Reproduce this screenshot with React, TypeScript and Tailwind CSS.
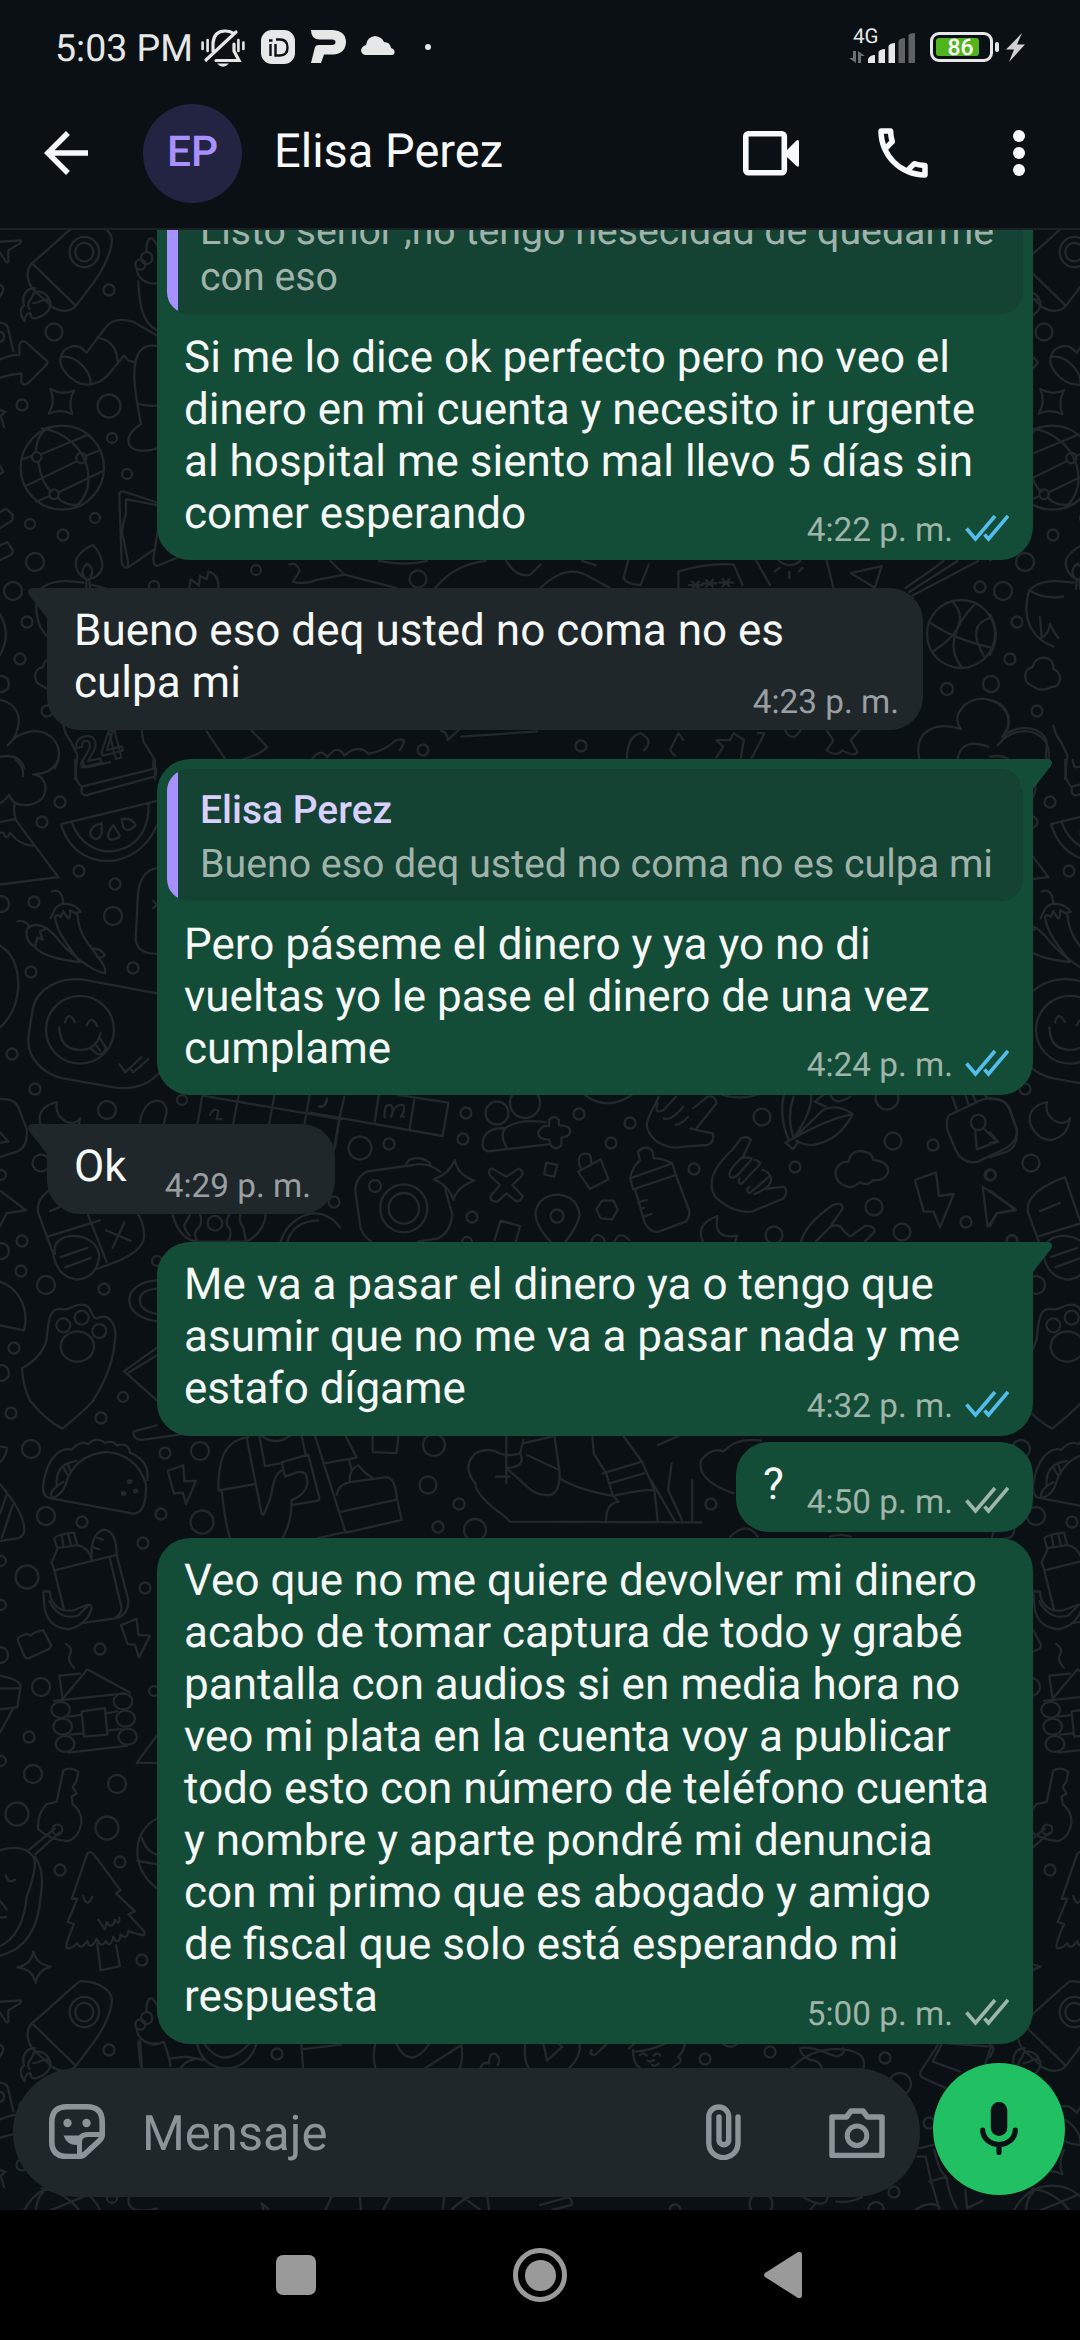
import type { ReactNode } from 'react';
import { MdArrowBack, MdOutlineCall } from 'react-icons/md';

type Message = {
  id: number;
  mine: boolean;
  lines: string[];
  time: string;
  read?: boolean;
  tail?: boolean;
  quote?: { author: string; lines: string[] };
  spacing: string;
};

const messages: Message[] = [
  {
    id: 1,
    mine: true,
    lines: [
      'Si me lo dice ok perfecto pero no veo el',
      'dinero en mi cuenta y necesito ir urgente',
      'al hospital me siento mal llevo 5 días sin',
      'comer esperando',
    ],
    time: '4:22 p. m.',
    read: true,
    quote: {
      author: '',
      lines: ['Listo señor ,no tengo nesecidad de quedarme', 'con eso'],
    },
    spacing: 'mb-7',
  },
  {
    id: 2,
    mine: false,
    lines: ['Bueno eso deq usted no coma no es', 'culpa mi'],
    time: '4:23 p. m.',
    tail: true,
    spacing: 'mb-[29px]',
  },
  {
    id: 3,
    mine: true,
    lines: [
      'Pero páseme el dinero y ya yo no di',
      'vueltas yo le pase el dinero de una vez',
      'cumplame',
    ],
    time: '4:24 p. m.',
    read: true,
    tail: true,
    quote: {
      author: 'Elisa Perez',
      lines: ['Bueno eso deq usted no coma no es culpa mi'],
    },
    spacing: 'mb-[29px]',
  },
  {
    id: 4,
    mine: false,
    lines: ['Ok'],
    time: '4:29 p. m.',
    tail: true,
    spacing: 'mb-7',
  },
  {
    id: 5,
    mine: true,
    lines: [
      'Me va a pasar el dinero ya o tengo que',
      'asumir que no me va a pasar nada y me',
      'estafo dígame',
    ],
    time: '4:32 p. m.',
    read: true,
    tail: true,
    spacing: 'mb-1.5',
  },
  {
    id: 6,
    mine: true,
    lines: ['?'],
    time: '4:50 p. m.',
    spacing: 'mb-1.5',
  },
  {
    id: 7,
    mine: true,
    lines: [
      'Veo que no me quiere devolver mi dinero',
      'acabo de tomar captura de todo y grabé',
      'pantalla con audios si en media hora no',
      'veo mi plata en la cuenta voy a publicar',
      'todo esto con número de teléfono cuenta',
      'y nombre y aparte pondré mi denuncia',
      'con mi primo que es abogado y amigo',
      'de fiscal que solo está esperando mi',
      'respuesta',
    ],
    time: '5:00 p. m.',
    spacing: '',
  },
];

// [cx, cy, r] of the bubbles scattered over the repeating part of the wallpaper
const tileDots: number[][] = [
  [109, 290, 5.5], [54, 332, 8.5], [22, 405, 5.5], [109, 406, 11.5], [112, 438, 5],
  [127, 474, 5], [30, 524, 5], [95, 518, 5], [63, 535, 5.5], [35, 562, 9],
  [13, 591, 9], [27, 622, 5.5], [20, 659, 5.5], [256, 570, 5], [154, 586, 5],
  [47, 711, 5.5], [1, 684, 8], [60, 802, 5.5], [42, 822, 5.5], [79, 871, 5.5],
  [115, 884, 5.5], [34, 902, 5.5], [113, 916, 9], [31, 972, 5.5], [133, 968, 5.5],
  [12, 1054, 5.5], [35, 1089, 5.5], [107, 1110, 9], [182, 1100, 5], [41, 1163, 8.5],
  [22, 1241, 5.5], [21, 1271, 5.5], [46, 1285, 9], [104, 1289, 5.5], [14, 1348, 5.5],
  [157, 1261, 5], [123, 1397, 5], [1, 1251, 8], [1, 1373, 8], [1, 1175, 5],
  [1, 904, 8], [11, 1413, 5.5], [101, 1418, 5.5], [31, 1449, 9], [46, 1516, 9],
  [82, 1522, 5.5], [165, 1453, 5.5], [200, 1451, 9], [161, 1514, 5.5], [202, 1522, 11.5],
  [143, 1543, 5.5], [145, 1588, 5.5], [27, 1577, 11.5], [100, 1649, 5.5], [41, 1687, 9],
  [29, 1737, 5.5], [33, 1774, 9], [117, 1784, 9], [17, 1814, 11.5], [107, 1828, 11.5],
  [120, 1862, 5.5], [60, 1870, 5.5], [142, 1960, 5.5], [154, 1691, 5], [1, 1605, 5],
  [1, 1561, 5], [0, 1655, 8], [1, 1761, 5],
];

const middleDots: number[][] = [
  [466, 1113, 5.5], [463, 1139, 5.5], [360, 1148, 11.5], [389, 1144, 5.5], [497, 1113, 11.5],
  [525, 1103, 15], [579, 1114, 5.5], [630, 1123, 5.5], [611, 1143, 5.5], [694, 1169, 5.5],
  [762, 1117, 8.5], [795, 1167, 5.5], [893, 1141, 8.5], [933, 1145, 5.5], [887, 1098, 11.5],
  [990, 1175, 5.5], [966, 1222, 5.5], [874, 1207, 8.5], [902, 1232, 8.5], [774, 1235, 8.5],
  [472, 1217, 5.5], [375, 1186, 6], [334, 1202, 5.5], [557, 1216, 6.5], [467, 1242, 5],
  [1012, 1240, 5], [434, 1445, 11], [428, 1485, 8.5], [459, 1504, 5.5], [438, 1527, 5.5],
  [475, 1530, 11], [711, 1504, 5.5], [418, 579, 8.5], [980, 587, 5.5], [947, 689, 6],
  [581, 746, 5.5], [423, 750, 5.5], [277, 2054, 5.5], [900, 2084, 11], [885, 2058, 5.5],
  [770, 2052, 5.5], [705, 2059, 5.5], [894, 2192, 5.5], [761, 2204, 11.5], [876, 2210, 8],
  [675, 2210, 5.5], [929, 2123, 5.5], [961, 634, 34],
];

function Stroke({ d }: { d: string }) {
  return <path d={d} vectorEffect="non-scaling-stroke" />;
}

function Oval({ at }: { at: number[] }) {
  return (
    <ellipse
      cx={at[0]}
      cy={at[1]}
      rx={at[2]}
      ry={at[3]}
      vectorEffect="non-scaling-stroke"
    />
  );
}

function Dots({ list }: { list: number[][] }) {
  return (
    <>
      {list.map(([x, y, r]) => (
        <circle key={`${x}-${y}`} cx={x} cy={y} r={r} />
      ))}
    </>
  );
}

function Tile() {
  return (
    <g>
      <Dots list={tileDots} />
      <path d="M57 1102Q37 1107 40 1123Q47 1140 61 1140Q78 1137 80 1118Q76 1125 67 1122Q54 1115 57 1102Z" />
      {/* rocket, boots, globe, candle */}
      <g transform="translate(0 228) scale(.3333 .3444)">
        <Stroke d="M96 102C150 60 200 10 240-20C300-20 345 10 334 50C320 120 270 170 228 226C210 245 180 245 155 228L110 188C80 165 75 125 96 102ZM96 102L228 226" />
        <Oval at={[253, 70, 44, 44]} />
        <Oval at={[253, 70, 27, 27]} />
        <Stroke d="M105 175C75 175 65 200 72 225C58 235 60 255 74 270C74 255 82 245 92 248C90 262 100 265 115 260C140 250 155 235 150 212M88 235C75 215 100 205 100 190C120 175 145 195 148 210C130 200 120 220 100 218" />
        <Stroke d="M0 40L60 36Q66 38 60 44L25 65L25 98Q20 104 16 95L0 72" />
        <Oval at={[421, 106, 15, 15]} />
        <Oval at={[440, 87, 17, 17]} />
        <Stroke d="M471 160C450 165 415 155 410 120M440 70C438 40 445 28 456 31C465 35 468 45 471 50M415 155C418 220 425 275 471 297" />
        <Stroke d="M0 382C20 372 40 368 58 368L58 340Q66 322 78 332L140 385Q146 391 138 398L85 450Q70 460 64 448L64 422Q30 425 0 435M0 275Q20 275 24 292L40 358M0 302Q14 304 12 318Q10 330 0 330" />
        <Stroke d="M182 375C190 345 220 340 240 345L260 362L320 285C340 262 370 265 400 272L471 312M182 375C175 400 200 430 230 447C260 462 300 455 330 420L372 370L385 385L405 390M292 318C340 325 352 360 352 385M182 375C220 365 275 410 272 455" />
        <Stroke d="M471 342C420 335 405 370 403 420C402 470 415 530 423 570C390 590 380 610 388 630C400 650 440 650 471 640M412 510Q440 518 471 516" />
        <Stroke d="M151 467Q185 487 222 472Q203 505 217 541Q183 523 146 539Q168 505 151 467Z" />
        <Oval at={[187, 696, 125, 122]} />
        <Stroke d="M108 650C108 610 130 585 150 578M125 582C190 590 260 640 265 720C268 760 250 790 225 812M115 680C120 720 140 760 155 765M175 785C190 800 220 810 240 800M72 670L95 662M123 657L265 600M76 750L230 677M257 662L300 645M110 795L148 778M175 768L308 706" />
        <Oval at={[110, 665, 14, 14]} />
        <Oval at={[244, 668, 15, 15]} />
        <Oval at={[162, 773, 14, 14]} />
        <Stroke d="M471 797L370 765Q355 765 358 780L365 970Q370 990 385 985L460 935M471 805L378 787L378 830Q360 885 370 900L382 960Q386 975 383 985M473 880L460 960Q460 985 475 980L530 958" />
        <Stroke d="M0 825L18 815L38 832L38 848L0 872M0 922L22 912L38 935Q40 945 30 950L0 965M0 165Q15 172 8 185L0 200M0 528L16 534L2 545L12 578M0 690L10 708L0 714" />
        <Stroke d="M262 1020C235 1010 222 985 230 960C240 940 265 925 280 920C300 945 310 965 307 985C300 1010 280 1018 262 1020M252 1012C240 995 255 980 262 975C278 985 280 1000 272 1012M260 1020L258 1048M268 1020L270 1048M118 1052C150 1020 200 1022 250 1030M275 1036L320 1048" />
        <Stroke d="M118 1052Q98 1110 122 1160Q145 1200 190 1215M118 1052Q160 1080 220 1070M150 1130L155 1190Q175 1180 180 1150Q195 1180 205 1190" />
        <Stroke d="M568 1048L572 1020L597 1038L600 1010L620 1020L625 998Q658 1005 655 1048M0 1122Q35 1180 0 1240" />
        <Stroke d="M128 1330C98 1320 98 1280 128 1275C135 1235 195 1240 190 1280C220 1290 215 1335 185 1332Q155 1350 128 1330Z" />
        <Stroke d="M0 1370C50 1380 65 1420 52 1455C45 1485 35 1490 23 1502C60 1455 130 1445 165 1490C185 1520 175 1550 165 1568M0 1535Q60 1525 72 1568M190 1445Q200 1480 212 1490L232 1530L225 1600M425 1458L430 1490L465 1545L465 1600" />
      </g>
      {/* watermelon, peppers, sticker card, pills, paw */}
      <g transform="translate(0 760) scale(.3333 .4082)">
        <Stroke d="M48 0Q75 20 68 40M175 0Q160 25 130 32L100 35C140 40 145 75 125 95C105 112 70 115 45 105Q30 95 28 85Q15 100 0 106M45 105Q38 125 48 148L175 287L0 305M0 178L10 178Q20 200 30 178Q60 210 100 210M0 152L45 145" />
        <Stroke d="M225 0L228 45Q240 65 245 65L460 22L460 0M245 65L245 80Q255 90 265 85L465 40Q470 38 468 20M248 0Q250 18 260 18L330 5" />
        <Stroke d="M183 157L471 100M183 157C210 230 280 255 350 245C410 235 450 200 471 160M215 152C240 210 300 230 350 222C420 210 450 160 445 106M305 155Q268 160 272 185Q290 205 305 180ZM340 160Q315 185 330 195Q355 195 360 185ZM365 145Q395 140 407 160Q385 180 370 165Z" />
        <Stroke d="M155 322Q185 312 190 350M152 388L165 365C180 345 225 350 242 372L225 375L210 368Q212 385 205 388Q195 380 190 370L182 385Q170 375 165 385C170 420 200 450 240 495M232 378C240 440 270 450 300 490Q320 510 315 522C280 520 200 470 165 430M52 395Q75 390 90 410M80 415Q100 395 140 412L165 430M80 415Q75 445 105 458Q130 485 240 495M105 458L112 435L128 440L120 420L140 412M275 462Q300 460 315 478Q305 488 290 482" />
        <Stroke d="M471 265C430 270 415 300 413 340L407 440Q412 475 471 475M460 345L471 355L460 362M0 455Q55 480 55 555Q50 620 0 655" />
        <Stroke d="M471 572L250 538C180 530 110 560 98 610L85 680C80 730 130 770 190 780L350 803Q430 810 480 765" />
        <Oval at={[240, 661, 102, 83]} />
        <Stroke d="M195 643Q205 612 225 642M260 650Q275 622 292 652M178 655Q180 710 240 710Q290 710 302 668M270 705L292 720Q310 725 318 705L300 682M285 695L300 712M358 745L376 765L424 728M392 758L400 765L446 732" />
        <Stroke d="M0 830Q45 830 55 850L80 905Q85 945 55 958L0 973M0 912L25 935L0 938M0 1055L78 1103L20 1110L0 1142M420 888C428 825 500 820 500 862L492 890" />
        <Stroke d="M225 1022Q100 1060 115 1110L160 1210M140 1168L300 1128M225 1022L262 1110L320 1230M165 1210C150 1150 290 1150 298 1215Q290 1270 230 1273Q170 1265 160 1210M290 1247L320 1238Q440 1205 432 1160Q430 1130 412 1110M182 1218L262 1195M196 1243L272 1220M318 1152L392 1178M373 1133L338 1195M150 1105L210 1085" />
        <Stroke d="M0 1278C50 1290 90 1340 72 1397L0 1385M471 1275C360 1280 360 1365 471 1375M471 1295Q415 1300 420 1325Q420 1350 471 1357" />
        <Stroke d="M90 1568Q70 1540 66 1490C100 1475 130 1450 140 1420C145 1370 150 1340 185 1345C210 1350 215 1335 240 1335C280 1330 270 1368 290 1368C340 1350 350 1400 345 1420C340 1480 310 1530 280 1568M471 1440L372 1497L470 1568M471 1458L388 1500" />
        <Oval at={[245, 1366, 21, 17]} />
        <Oval at={[190, 1385, 21, 17]} />
        <Oval at={[298, 1399, 21, 17]} />
        <Oval at={[232, 1437, 50, 37]} />
      </g>
      {/* taco, picnic, cabin, key, tree */}
      <g transform="translate(0 1400) scale(.3333 .4209)">
        <Stroke d="M88 0Q140 50 187 68Q240 35 282 0M540 82L425 95Q400 95 400 75L470 60" />
        <Stroke d="M130 200C140 140 180 110 215 118Q240 95 265 105Q290 85 315 102Q340 95 350 108Q385 100 390 125Q450 145 442 190M130 200Q125 230 150 233L400 270Q440 270 438 200Q410 130 320 123Q220 130 195 205Q180 230 155 232Q145 215 190 195M170 205Q165 150 230 145M190 160L203 178M205 155L212 170" />
        <Oval at={[389, 194, 5, 3]} />
        <Oval at={[371, 222, 5, 3]} />
        <Oval at={[407, 216, 5, 3]} />
        <Stroke d="M503 168L550 155L553 193L588 192L558 247L548 220L522 222ZM363 535L410 520L415 558L450 560L417 612L405 582L383 580Z" />
        <Stroke d="M0 200Q75 270 73 310Q70 325 55 328L0 335M20 225L0 270M38 250L5 328M0 110L20 113Q22 130 0 148" />
        <Stroke d="M163 330Q165 320 222 315L232 345L172 352ZM185 322L190 345M205 320L212 342M172 355L155 385L163 405L192 498M163 405L350 368M232 345Q265 350 275 378Q270 320 310 308Q350 310 350 368L385 475Q385 510 350 518L245 530M328 372L365 495Q362 510 345 518M280 350L298 355M285 325L308 332" />
        <Stroke d="M130 455L150 455L152 470Q170 505 220 500Q250 490 262 487Q275 485 275 495Q260 535 205 545Q140 540 133 490ZM148 478Q180 525 235 512L262 490" />
        <Stroke d="M55 575Q50 565 60 562L82 555L92 560L105 552L130 547L152 580Q155 588 145 592L90 612Q80 618 73 608Z" />
        <Stroke d="M198 580Q220 590 210 605Q200 618 222 636M240 650L178 655L188 710L262 640L390 695M162 715L375 697M205 752L245 748M245 740L315 732L322 795L252 800ZM315 745L352 740M210 795L250 792M322 785L362 782M205 838L380 822" />
        <Oval at={[182, 736, 28, 19]} />
        <Oval at={[188, 776, 28, 19]} />
        <Oval at={[195, 817, 28, 19]} />
        <Oval at={[369, 716, 28, 19]} />
        <Oval at={[377, 757, 28, 19]} />
        <Oval at={[383, 800, 28, 19]} />
        <Stroke d="M0 655Q60 665 62 680L52 730L0 735M0 685L58 685M38 735L0 790M471 797L410 862L471 862" />
        <Stroke d="M190 880Q210 870 235 883L230 905L218 920L230 935L215 942L218 960Q250 980 243 1010Q235 1040 205 1048Q150 1045 115 1020Q110 985 140 960L170 955ZM178 1028L105 1080M165 1018L85 1070" />
        <Oval at={[172, 1021, 15, 12]} />
        <Stroke d="M0 1070C60 1055 105 1070 105 1105Q100 1140 80 1180Q70 1270 0 1298M105 1085Q135 1120 122 1180Q110 1300 0 1320M18 1130Q25 1150 45 1140M0 1190L20 1210M0 1230L18 1228" />
        <Stroke d="M262 1078Q270 1070 282 1080L362 1165L348 1172L405 1215L385 1222L432 1262Q438 1275 420 1270L385 1262Q380 1285 362 1270Q355 1300 340 1275Q330 1305 318 1285Q305 1305 290 1280Q270 1310 262 1285Q240 1310 232 1290Q215 1305 200 1302Q195 1295 222 1245L203 1240L232 1185L215 1185ZM250 1178Q260 1210 277 1180M295 1235L315 1257L320 1240Q335 1260 345 1235Q360 1250 358 1230M292 1292L302 1355L360 1345L348 1295" />
        <Stroke d="M471 995C400 1020 385 1110 471 1160M425 1040Q440 1075 471 1080M412 1095L471 1103M100 1310Q108 1340 152 1346Q112 1355 107 1385Q98 1352 53 1348Q95 1340 100 1310Z" />
      </g>
    </g>
  );
}

function Wallpaper() {
  return (
    <svg
      className="absolute inset-0 h-full w-full"
      viewBox="0 230 1080 1980"
      fill="none"
      stroke="#22282c"
      strokeWidth="2.3"
      strokeLinecap="round"
      strokeLinejoin="round"
    >
      <Tile />
      <g transform="translate(990 0)">
        <Tile />
      </g>
      <g transform="translate(0 1760)">
        <Tile />
      </g>
      <g transform="translate(990 1760)">
        <Tile />
      </g>
      <Dots list={middleDots} />
      <text
        x="80"
        y="768"
        fontSize="41"
        fontFamily="Roboto, sans-serif"
        fontWeight="700"
        strokeWidth="2"
        transform="rotate(-14 80 768)"
      >
        24
      </text>
      <path d="M929 622Q955 640 993 648M952 601Q975 625 932 652M975 604Q940 640 962 668M990 618Q965 625 985 658" />
      <g transform="translate(0 760) scale(.3333 .4082)">
        <Stroke d="M607 822L593 890M716 822L700 890M823 822L808 890M929 822L914 890M607 822L1020 880M1018 880L1005 950M630 870Q640 850 655 860L650 880L665 880M980 830Q980 850 960 848" />
        <Stroke d="M517 1112Q540 1180 600 1180L740 1180Q795 1155 797 1112M570 1115L552 1140Q560 1160 570 1165M600 1112Q610 1140 590 1150Q580 1165 592 1178M690 1112Q670 1130 690 1150Q695 1165 685 1178M722 1112Q715 1130 730 1145L738 1178M842 1180C860 1130 920 1105 960 1112Q1000 1120 1020 1145M862 1180Q880 1130 955 1128" />
        <Oval at={[645, 1135, 22, 18]} />
      </g>
      {/* strips above and below the first reply */}
      <g transform="translate(0 220) scale(.6888 .3444)">
        <Stroke d="M420 1000Q430 990 435 1020L425 1050Q440 1060 460 1045L500 1030L480 990M500 1030L575 1068M632 1068Q660 1000 705 990M735 990Q750 1040 770 1030L785 1000M785 1068Q820 1000 850 1030L885 1068M845 990L865 1003M912 990L905 1040Q910 1058 930 1060L942 1000M985 1068L985 1020Q1030 995 1065 1000L1078 1060M1098 990L1118 1060M1130 988Q1145 1015 1162 990M1125 1020L1132 1010M1146 1022L1146 1040M1165 1010L1160 1020M1200 988L1210 1068M1235 1025L1280 1005L1270 1068ZM1315 1068Q1350 1020 1370 990M1325 1090L1420 990M1320 1080L1390 990M550 990Q590 1005 620 990" />
        <Stroke d="M1005 1050L1015 1070M1015 1050L1005 1070M1000 1060H1020M1025 1045L1035 1065M1035 1045L1025 1065M1020 1055H1040M1049 1043L1059 1063M1059 1043L1049 1063M1044 1053H1064" />
        <Stroke d="M300 1485L328 1568M365 1482L388 1530Q380 1550 350 1568M452 1568Q465 1530 475 1560Q490 1520 500 1555Q520 1520 535 1550Q560 1540 575 1510Q595 1500 580 1540M640 1482Q650 1490 650 1510L665 1482M670 1500L780 1485M910 1568Q910 1500 930 1490Q950 1510 935 1540M980 1555Q970 1540 975 1530L985 1490L992 1510M1040 1560L1050 1530L1040 1510L1060 1510L1065 1490L1080 1510L1075 1568M1090 1568L1110 1490L1100 1490M1140 1482Q1150 1520 1162 1482M1200 1482L1210 1510L1200 1540Q1215 1560 1223 1540Q1240 1560 1245 1545L1235 1510L1248 1482" />
        <Stroke d="M1335 1568C1325 1480 1360 1455 1395 1478C1380 1440 1400 1390 1428 1390C1460 1400 1475 1450 1455 1500C1480 1460 1515 1470 1520 1520L1518 1568M1390 1568Q1395 1500 1435 1530" />
      </g>
      {/* people, gestures, bottle, lock */}
      <g transform="translate(310 1090) scale(.491 .3333)">
        <Stroke d="M70 20L60 85L46 200M140 15L132 95M213 22L203 118M0 68L270 138L282 38L180 15M35 25Q32 55 18 50M152 82Q150 40 165 45Q172 60 165 80Q172 40 190 45Q195 60 185 80L192 80" />
        <Stroke d="M485 163L362 184Q345 175 355 140Q365 112 396 115M400 172Q385 130 400 112Q430 85 480 97M487 108L487 90Q497 72 507 90L507 106Q530 105 530 125Q528 140 512 143L512 165Q500 185 490 165L487 148Q465 150 465 128Q470 105 487 108Z" />
        <Stroke d="M710 20C700 60 680 90 688 120C700 160 730 180 760 170L810 165Q825 155 820 130Q800 125 775 115M788 113L828 40Q825 15 810 20L780 55M708 40Q700 75 720 60L745 20M720 85Q735 95 760 50M745 105Q760 100 770 80M560 15Q605 65 655 15M840 15Q875 30 910 15" />
        <Stroke d="M965 15Q955 80 975 150M985 20Q970 80 985 145M1020 15Q1025 60 985 145L1045 60Q1075 40 1105 72Q1050 90 985 145M1105 72Q1080 150 1025 165Q1005 165 990 152M985 145L968 158L984 177L995 155M1045 15L1028 35L1050 50M1060 15Q1070 50 1100 20" />
        <Stroke d="M1302 75Q1340 50 1370 28Q1410 15 1425 55L1440 120Q1440 160 1410 180L1360 215Q1330 225 1315 180L1298 120Q1295 85 1302 75ZM1308 20L1318 62M1335 15L1342 48M1350 15L1357 38M1374 15L1380 25M1355 122L1358 178L1400 155L1372 115" />
        <Oval at={[1361, 97, 15, 23]} />
        <Stroke d="M898 150Q890 135 878 145L860 180Q800 260 825 320Q860 370 900 365L965 325Q975 300 965 290L925 297M898 150L882 200Q850 240 855 260Q865 270 880 240Q900 210 900 205Q885 200 880 205M905 210Q920 215 915 225L880 280Q870 285 875 265M922 240Q940 250 935 260L895 310Q885 300 895 290M938 260Q945 290 905 312" />
        <Stroke d="M652 265L738 220M658 298L745 255L738 220Q720 205 700 205L698 185Q685 160 668 185L672 210Q655 235 652 265L658 298M662 298L682 400Q695 430 710 425L765 395Q775 380 772 360L745 255M668 337L686 330M673 358L680 353M678 380L696 372" />
        <Stroke d="M546 245L570 297L608 268L592 208ZM552 238Q540 195 560 190Q575 190 572 218M481 218L504 225L497 260L477 253ZM595 332L618 332L627 360L615 388L592 385L583 358Z" />
        <Stroke d="M370 235L400 260L425 236Q438 245 430 260L412 285L433 318Q430 338 418 332L400 310L382 335Q365 335 368 318L387 285L366 255Q362 240 370 235ZM295 210Q300 255 335 272Q300 290 292 330Q285 290 252 268Q285 250 295 210Z" />
        <Stroke d="M115 245L210 225Q240 215 265 245M115 245Q90 265 93 310L103 415Q110 440 125 455M275 295L290 375Q285 430 260 445L220 455M195 225Q200 200 225 205Q240 210 245 222" />
        <Oval at={[191, 355, 48, 72]} />
        <Oval at={[191, 355, 31, 46]} />
        <Stroke d="M490 455Q455 400 460 360Q470 315 505 314Q545 320 549 375Q545 410 520 455M376 450L388 392L428 408L418 460M573 457Q580 420 598 445L600 455M620 455Q630 420 650 450M800 455L797 440Q790 400 830 378Q820 450 870 437L866 455" />
        <Stroke d="M1000 455Q1010 400 1065 345Q1085 335 1085 355L1060 410L1030 455M1060 410Q1080 400 1085 420L1100 440L1130 408Q1150 405 1150 425L1130 455" />
        <Stroke d="M1095 290Q1070 280 1070 245Q1075 215 1097 215Q1100 185 1120 183Q1145 185 1147 210Q1178 215 1178 245Q1170 275 1147 270Q1135 290 1120 277Q1105 295 1095 290ZM1232 270L1275 247L1281 318L1311 312L1283 412L1270 365L1250 365ZM1370 290L1437 358L1400 370L1380 410Z" />
      </g>
      {/* phone in hand, desk */}
      <g transform="translate(0 1400) scale(.3333 .4209)">
        <Stroke d="M655 215C655 130 680 95 745 88M655 215L765 200M740 90L785 270Q790 280 800 255C825 220 810 180 850 165L845 148L925 130L958 232Q958 240 945 240L875 250M850 165L855 182L890 172Q925 165 922 200Q915 225 875 238Q875 290 848 328M665 215Q675 290 690 328M778 85L795 157L845 150M905 85L917 130M785 85Q825 110 870 85" />
        <Stroke d="M945 85L1037 315M978 150L1070 137L1037 85M1048 143L1055 165M1010 225Q1015 200 1050 195L1160 183Q1185 185 1190 230L1205 285L1040 315M1025 265L1187 237M1050 195Q1045 165 1075 155Q1095 175 1118 185M955 328L1040 313M1118 85L1118 124L1190 126L1195 85" />
      </g>
      <g transform="translate(0 1200) scale(.6888 .3333)">
        <Stroke d="M1018 967L740 965Q735 950 720 930Q690 880 690 850Q670 800 690 760Q710 740 725 760Q740 770 755 760L760 720M735 710L735 850M755 760Q765 800 735 805Q750 830 765 860Q780 890 800 885Q815 870 812 810L765 765M760 730L805 708L812 810M812 835Q840 870 890 888L898 905Q880 910 880 960M890 888Q930 870 950 870L955 965M860 708L862 760L880 820L890 888M875 820L932 785L950 870M885 850L935 820M905 708L932 785M945 840L980 965M975 790L970 870L990 960M1005 840L1005 965M955 735L985 708M720 830L740 830M1065 880Q1010 840 1018 780Q1035 740 1050 755Q1070 710 1105 722M1060 1010Q1085 960 1100 1010M1205 1010Q1220 1000 1235 1010" />
      </g>
      <g transform="translate(0 2040) scale(.3444 .3333)">
        <Stroke d="M407 0L412 84M430 10Q450 20 475 5Q490 40 495 78M495 55L540 50L590 60M525 84Q540 60 575 55M572 10C590 110 720 110 745 10M592 10Q650 95 725 10M875 10L880 84M875 28L990 14M1090 84Q1080 50 1090 10M1150 10Q1190 95 1248 10M1235 84L1340 15Q1345 60 1335 84M1395 84Q1400 65 1420 70Q1420 35 1440 42Q1455 55 1445 75M1525 10Q1520 60 1535 84" />
        <Stroke d="M765 510L760 490L780 508M945 510L962 472M1045 472L1048 510M1112 510L1132 472M1285 510L1290 472M1310 510Q1340 480 1360 472M1345 472L1395 510M1415 472L1420 510" />
      </g>
      <g transform="translate(540 2040) scale(.3444 .3333)">
        <Stroke d="M258 25L275 10M270 30Q270 70 290 84M275 35Q330 30 375 5M420 10Q420 35 400 50Q420 60 395 75L385 84M290 45Q300 35 310 47M330 47Q342 35 350 47M312 62Q320 68 332 60M325 75Q335 80 345 70M10 10L20 62L65 20L45 5M85 84Q120 50 115 10M150 30Q140 45 160 45L195 10M530 10Q550 30 575 10" />
        <Stroke d="M730 84Q790 20 880 28Q950 35 940 84M755 25Q780 15 860 50Q890 40 880 25M755 25Q755 45 785 60Q810 60 818 84M1155 15L1105 95Q1100 110 1115 115L1180 145M1165 15L1140 65L1220 95M1180 10L1310 20L1290 80" />
        <Stroke d="M1100 325L1143 315M1095 350L1120 350L1135 420L1160 510M1145 330Q1160 400 1180 410L1130 425M1180 410Q1185 460 1210 505M1235 450L1240 505L1285 482M1090 510Q1130 480 1160 500M0 495L80 472Q95 475 92 495L35 510M765 472Q830 510 835 472M785 510L800 490M860 485Q900 490 935 472" />
      </g>
    </svg>
  );
}

function Ticks({ read }: { read?: boolean }) {
  return (
    <svg
      className={`h-7 w-11 ${read ? 'text-[#53bdeb]' : 'text-[#9fb5aa]'}`}
      viewBox="0 0 44 28"
      fill="none"
      stroke="currentColor"
      strokeWidth="3.6"
    >
      <path d="M1.5 14.5L10.5 25L30 2M19.5 20.5L23.5 25L43 2" />
    </svg>
  );
}

function Tail({ mine }: { mine: boolean }) {
  return (
    <svg
      className={`absolute top-0 h-8 w-8 ${
        mine ? '-right-[19px] text-[#144d37]' : '-left-[19px] -scale-x-100 text-[#1f272a]'
      }`}
      viewBox="0 0 32 32"
      fill="currentColor"
    >
      <path d="M0 0H28Q34 1 31 7L13 30H0Z" />
    </svg>
  );
}

function Quote({ author, lines }: { author: string; lines: string[] }) {
  return (
    <div className="mx-2.5 mt-2.5 flex overflow-hidden rounded-[22px] bg-[#144233]">
      <div className="w-[11px] bg-[#a791ff]" />
      <div className="pt-[18px] pb-3.5 pl-[22px] text-[39.3px] leading-[46px] whitespace-nowrap text-[#9fb3aa]">
        {author && (
          <p className="mb-2 text-[39px] font-medium text-[#d9d0fd]">{author}</p>
        )}
        {lines.map((line) => (
          <p key={line}>{line}</p>
        ))}
      </div>
    </div>
  );
}

function Bubble({ message }: { message: Message }) {
  const { mine, lines, time, read, tail, quote, spacing } = message;
  const short = lines.length === 1;
  let width = 'w-[876px]';
  if (short) width = mine ? 'w-[297px]' : 'w-[288px]';

  let corners = 'rounded-[33px]';
  if (tail) corners = mine ? 'rounded-[33px] rounded-tr-none' : 'rounded-[33px] rounded-tl-none';

  return (
    <div
      className={`relative shrink-0 ${width} ${corners} ${spacing} ${
        mine ? 'self-end bg-[#144d37]' : 'self-start bg-[#1f272a]'
      }`}
    >
      {tail && <Tail mine={mine} />}
      {quote && <Quote author={quote.author} lines={quote.lines} />}
      <div
        className={`px-[27px] text-[44px] leading-[52px] whitespace-nowrap text-[#f5f8f7] ${
          quote ? 'pt-[17px] pb-[21px]' : 'pt-4 pb-[22px]'
        }`}
      >
        {lines.map((line) => (
          <p key={line}>{line}</p>
        ))}
      </div>
      <div
        className={`absolute right-6 flex items-end gap-3 text-[33.3px] leading-none ${
          mine ? 'bottom-[13px] text-[#9fb5aa]' : 'bottom-[11px] text-[#9a9fa1]'
        }`}
      >
        <span>{time}</span>
        {mine && (
          <span className="mb-[5px]">
            <Ticks read={read} />
          </span>
        )}
      </div>
    </div>
  );
}

function StatusBar() {
  return (
    <div className="flex h-[78px] shrink-0 items-start pl-[55px] text-[#e6e8e7]">
      <span className="mt-[27px] w-[146px] text-[37.5px] leading-[44px] whitespace-nowrap">
        5:03 PM
      </span>
      <svg className="mt-[29px] h-[38px] w-11" viewBox="0 0 44 38" fill="none" stroke="currentColor" strokeWidth="3.2" strokeLinecap="round">
        <path d="M12 22V14Q13 2 24 2Q29 2 32 4M5 31L35 3M33 15V22L38 31.5H15" />
        <path d="M1.6 13.5V20M6.6 11V22M37.4 11V22M42.4 13.5V20" strokeWidth="2.6" />
        <path d="M16 34.5H28Q22 41 16 34.5Z" fill="currentColor" stroke="none" />
      </svg>
      <svg className="mt-[30px] ml-4 h-[34px] w-[34px]" viewBox="0 0 34 34" fill="none">
        <rect width="34" height="34" rx="11" fill="currentColor" />
        <path d="M15 9.5H19Q26.5 9.5 26.5 17.5Q26.5 25.5 19 25.5H14.5V14M9.500 14V26M8 10.500H11.500" stroke="#0b1014" strokeWidth="2.4" />
      </svg>
      <svg className="mt-[30px] ml-4 h-[33px] w-[35px]" viewBox="0 0 35 33" fill="currentColor">
        <path d="M0 0H22Q35 1 35 12.5Q34 24 22 24.5H13L10 33H0L4 17Q5 15 8 15H21Q24.500 15 24.500 12Q24.500 9.500 21 9.500H8Q0 9 0 0Z" />
      </svg>
      <svg className="mt-9 ml-[15px] h-[19px] w-[34px]" viewBox="0 0 34 19" fill="currentColor">
        <path d="M4 19Q0 18 0 14Q1 10 5 9Q6 1 14 0Q21 1 23 6Q29 6 30 12Q34 13 33.500 17Q33 19 31 19Z" />
      </svg>
      <div className="mt-[44px] ml-[30px] h-1.5 w-1.5 rounded-full bg-current" />

      <div className="mt-[27px] ml-[418px] flex w-[29px] flex-col">
        <span className="pl-1 text-[20.5px] leading-5">4G</span>
        <svg className="mt-1 h-3 w-4" viewBox="0 0 16 12" fill="#6b6f71">
          <path d="M4 0H7V12L0 7H4ZM9 12V0L16 5H12V12Z" />
        </svg>
      </div>
      <svg className="mt-[33px] -ml-[10px] h-[30px] w-12" viewBox="0 0 48 30" fill="currentColor">
        <path d="M0 26Q2 22 7 22V30H0ZM10.500 19Q12 16 17 16V30H10.500ZM20.500 13Q22 10 27 10V30H20.500Z" />
        <path d="M30.500 8Q32 5 37 5V30H30.500ZM40.500 2Q42 0 47 0V30H40.500Z" fill="#5e6264" />
      </svg>
      <div className="mt-8 ml-[14px] flex h-[30px] w-[63px] rounded-[9px] border-[3px] border-current p-[3px]">
        <div className="flex h-[18px] w-[43px] items-center justify-center rounded-[3px] bg-[#50b41c] pl-1.5 text-[23px] leading-none font-medium text-white">
          86
        </div>
      </div>
      <div className="mt-[42px] ml-0.5 h-2.5 w-1 rounded-sm bg-current" />
      <svg className="mt-[33px] ml-[7px] h-[29px] w-[19px]" viewBox="0 0 19 29" fill="#cfd1d1">
        <path d="M16 0L0 16.500H8L3 29L19 11.500H11Z" />
      </svg>
    </div>
  );
}

function Header() {
  return (
    <div className="flex h-[152px] shrink-0 items-center border-b-2 border-[#1a2024] pl-[33px] text-[#f7f8fa]">
      <MdArrowBack className="h-[66px] w-[66px]" />
      <div className="ml-11 flex h-[99px] w-[99px] items-center justify-center rounded-full bg-[#232342] text-[42.5px] font-medium text-[#a791ff]">
        EP
      </div>
      <span className="ml-[32px] w-[469px] pb-px text-[47px] whitespace-nowrap">
        Elisa Perez
      </span>
      <svg className="h-[45px] w-[56px]" viewBox="0 0 56 45" fill="none">
        <rect x="2.800" y="2.800" width="38.500" height="39" rx="2.500" stroke="currentColor" strokeWidth="5.600" />
        <path d="M44 19L53.500 9.500Q56 8 56 11V34Q56 37 53.500 35L44 26Z" fill="currentColor" />
      </svg>
      <MdOutlineCall className="ml-[71px] h-[66px] w-[66px]" />
      <div className="ml-[77px] flex flex-col gap-[5.5px]">
        <div className="h-[11.5px] w-[11.5px] rounded-full bg-current" />
        <div className="h-[11.5px] w-[11.5px] rounded-full bg-current" />
        <div className="h-[11.5px] w-[11.5px] rounded-full bg-current" />
      </div>
    </div>
  );
}

function Glyph({ className, box, children }: { className: string; box: string; children: ReactNode }) {
  return (
    <svg className={className} viewBox={box} fill="none" stroke="currentColor">
      {children}
    </svg>
  );
}

function Composer() {
  return (
    <div className="relative flex h-[147px] shrink-0 items-start pl-[13px]">
      <div className="mt-[5px] flex h-[129px] w-[907px] items-center rounded-full bg-[#20272a] pl-9 text-[#8b9498]">
        <Glyph className="mb-0.5 h-[55px] w-14" box="0 0 56 55">
          <path d="M18 2.800H38Q53.200 2.800 53.200 18V31Q53.200 34 50 37L36 50Q33 52.500 30 52.500H18Q2.800 52.500 2.800 38V18Q2.800 2.800 18 2.800Z" strokeWidth="5.600" />
          <path d="M53 30.500H39Q30.500 30.500 30.500 38V52" strokeWidth="5" />
          <path d="M14.500 31.500H34Q30 35 30 41Q18 42 14.500 31.500Z" fill="currentColor" stroke="none" />
          <circle cx="18.500" cy="19" r="4.200" fill="currentColor" stroke="none" />
          <circle cx="37.500" cy="19" r="4.200" fill="currentColor" stroke="none" />
        </Glyph>
        <span className="ml-[37px] w-[564px] pt-0.5 text-[49px]">Mensaje</span>
        <Glyph className="mb-0.5 h-[57px] w-[37px]" box="0 0 37 57">
          <path
            d="M32 14V40A14.600 14.600 0 0 1 2.800 40V13A10 10 0 0 1 22.700 13V37.500A4.900 4.900 0 0 1 13 37.500V14"
            strokeWidth="5.400"
            strokeLinecap="round"
          />
        </Glyph>
        <Glyph className="ml-[86px] h-[50px] w-14" box="0 0 56 50">
          <path d="M3 9H17.500L22 3H34L38.500 9H53V47.500H3Z" strokeWidth="5.500" strokeLinejoin="round" />
          <circle cx="28" cy="27.700" r="9.800" strokeWidth="5" />
        </Glyph>
      </div>
      <div className="ml-[13px] flex h-[132px] w-[132px] items-center justify-center rounded-full bg-[#21c063] text-[#0b1014]">
        <Glyph className="mb-0.5 h-[53px] w-[38px]" box="0 0 38 53">
          <rect x="10.800" width="16.500" height="34" rx="8.200" fill="currentColor" stroke="none" />
          <path d="M2.700 28A16.300 14.500 0 0 0 35.300 28M19 43V50.500" strokeWidth="5.200" strokeLinecap="round" />
        </Glyph>
      </div>
    </div>
  );
}

function NavBar() {
  return (
    <div className="flex h-[130px] shrink-0 items-center bg-black pl-[276px]">
      <div className="h-10 w-10 rounded-[7px] bg-[#9a9a9a]" />
      <div className="ml-[197px] flex h-[54px] w-[54px] items-center justify-center rounded-full border-[5px] border-[#9a9a9a]">
        <div className="h-[31px] w-[31px] rounded-full bg-[#9a9a9a]" />
      </div>
      <svg className="ml-[197px] h-[46px] w-[38px]" viewBox="0 0 38 46" fill="#9a9a9a">
        <path d="M1 21Q-1 23 1 25L34 46Q38 47 38 43V3Q38-1 34 0Z" />
      </svg>
    </div>
  );
}

export default function App() {
  return (
    <div className="flex h-[2340px] w-[1080px] flex-col overflow-hidden bg-[#0b1014] font-[Roboto,sans-serif] [text-rendering:geometricPrecision]">
      <StatusBar />
      <Header />
      <div className="relative flex min-h-0 flex-1 flex-col bg-[#0a1014]">
        <Wallpaper />
        <div className="relative flex min-h-0 flex-1 flex-col justify-end overflow-hidden pr-[47px] pb-[19px] pl-[47px]">
          {messages.map((message) => (
            <Bubble key={message.id} message={message} />
          ))}
        </div>
        <Composer />
      </div>
      <NavBar />
    </div>
  );
}
